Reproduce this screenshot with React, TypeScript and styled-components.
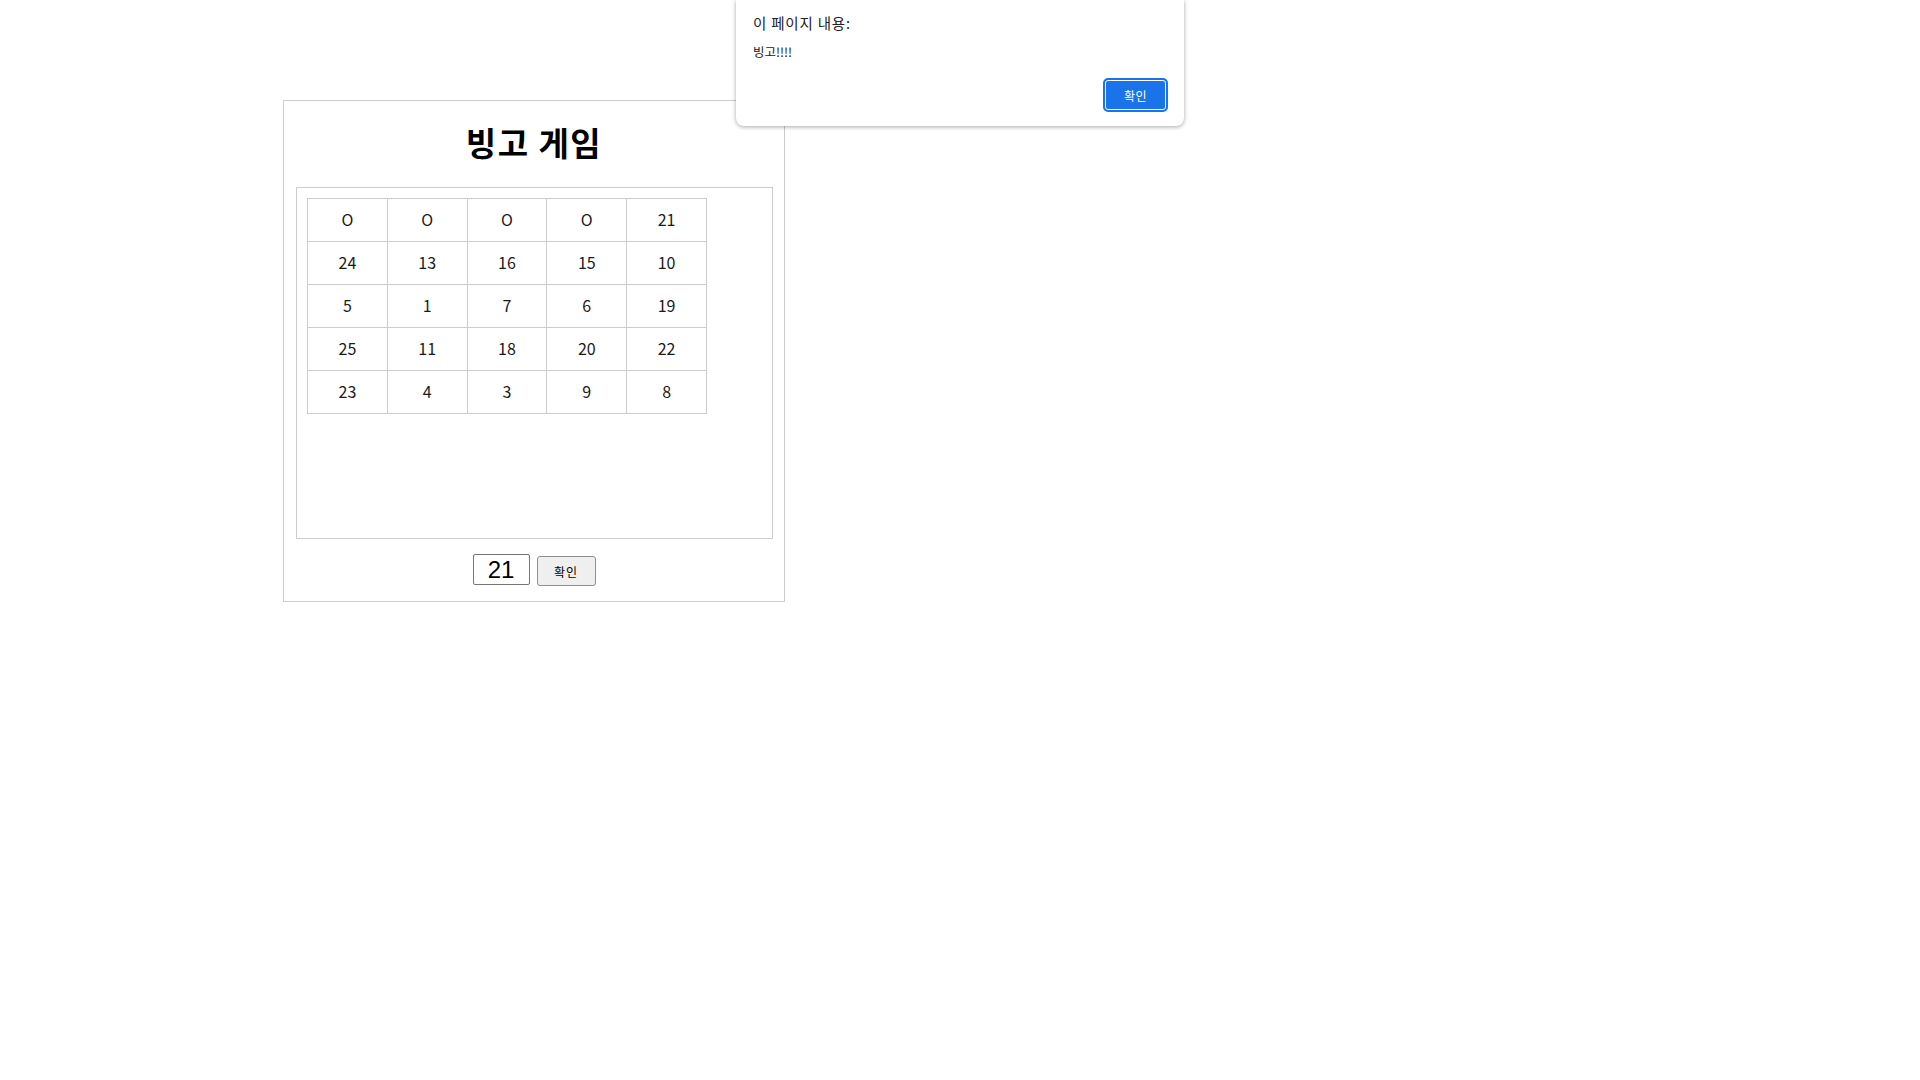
import React, { useState } from 'react';
import styled, { createGlobalStyle } from 'styled-components';

const GlobalStyle = createGlobalStyle`
    html, body {
        margin: 0;
        padding: 0;
        background: #fff;
    }
    body {
        font-family: 'Noto Sans CJK KR', 'Noto Sans', sans-serif;
        color: #000;
    }
`;

const Page = styled.div`
    position: relative;
    width: 1920px;
    height: 1080px;
    padding: 100px 0 0 283px;
    box-sizing: border-box;
`;

const Board = styled.div`
    width: 502px;
    box-sizing: border-box;
    border: 1px solid #ccc;
    padding: 0 12px 16px;
`;

const Title = styled.h1`
    margin: 18px 0 22px;
    height: 46px;
    line-height: 46px;
    font-size: 33px;
    font-weight: 700;
    letter-spacing: 1.5px;
    text-align: center;
`;

const BoardArea = styled.div`
    width: 477px;
    height: 352px;
    box-sizing: border-box;
    border: 1px solid #ccc;
    padding: 10px;
`;

const Grid = styled.table`
    border-collapse: collapse;
    width: 400px;
`;

const Cell = styled.td`
    width: 80px;
    height: 40px;
    padding: 0 0 2px;
    border: 1px solid #ccc;
    text-align: center;
    font-size: 16px;
    color: #1a1a1a;
`;

const InputRow = styled.div`
    display: flex;
    justify-content: center;
    align-items: flex-start;
    gap: 7px;
    margin-top: 15px;
    height: 31px;
`;

const NumberInput = styled.input`
    width: 57px;
    height: 31px;
    box-sizing: border-box;
    border: 1px solid #767676;
    border-radius: 2px;
    padding: 0 6px;
    font-family: 'Liberation Sans', Arial, sans-serif;
    font-size: 24px;
    text-align: center;
    color: #000;
    outline: none;
`;

const CheckButton = styled.button`
    width: 59px;
    height: 30px;
    box-sizing: border-box;
    margin-top: 2px;
    border: 1px solid #8f8f8f;
    border-radius: 3px;
    background: #efefef;
    font-family: 'Noto Sans CJK KR', sans-serif;
    font-size: 12px;
    letter-spacing: 1px;
    color: #000;
    padding: 0;
`;

const Alert = styled.div`
    position: absolute;
    top: 0;
    left: 736px;
    width: 448px;
    height: 126px;
    box-sizing: border-box;
    background: #fff;
    border-radius: 0 0 8px 8px;
    box-shadow: 0 1px 4px rgba(0, 0, 0, 0.35);
    padding: 13px 16px 14px 17px;
    display: flex;
    flex-direction: column;
`;

const AlertTitle = styled.div`
    font-size: 14.5px;
    line-height: 20px;
    letter-spacing: 0.8px;
    color: #202124;
`;

const AlertMessage = styled.div`
    margin-top: 11px;
    font-size: 12.5px;
    line-height: 16px;
    color: #202124;
`;

const AlertFooter = styled.div`
    margin-top: auto;
    display: flex;
    justify-content: flex-end;
`;

const OkButton = styled.button`
    width: 65px;
    height: 34px;
    box-sizing: border-box;
    border: 2px solid #1a73e8;
    border-radius: 5px;
    box-shadow: inset 0 0 0 1px #fff;
    background: #1a73e8;
    color: #fff;
    font-family: 'Noto Sans CJK KR', sans-serif;
    font-size: 12px;
    letter-spacing: 0.5px;
    padding: 0;
`;

const board: (string | number)[][] = [
    ['O', 'O', 'O', 'O', 21],
    [24, 13, 16, 15, 10],
    [5, 1, 7, 6, 19],
    [25, 11, 18, 20, 22],
    [23, 4, 3, 9, 8],
];

const App = () => {
    const [value, setValue] = useState('21');

    return (
        <>
            <GlobalStyle />
            <Page>
                <Board>
                    <Title>빙고 게임</Title>
                    <BoardArea>
                        <Grid>
                            <tbody>
                                {board.map((row, i) => (
                                    <tr key={i}>
                                        {row.map((cell, j) => (
                                            <Cell key={j}>{cell}</Cell>
                                        ))}
                                    </tr>
                                ))}
                            </tbody>
                        </Grid>
                    </BoardArea>
                    <InputRow>
                        <NumberInput value={value} onChange={(e) => setValue(e.target.value)} />
                        <CheckButton>확인</CheckButton>
                    </InputRow>
                </Board>

                <Alert>
                    <AlertTitle>이 페이지 내용:</AlertTitle>
                    <AlertMessage>빙고!!!!</AlertMessage>
                    <AlertFooter>
                        <OkButton>확인</OkButton>
                    </AlertFooter>
                </Alert>
            </Page>
        </>
    );
};

export default App;
